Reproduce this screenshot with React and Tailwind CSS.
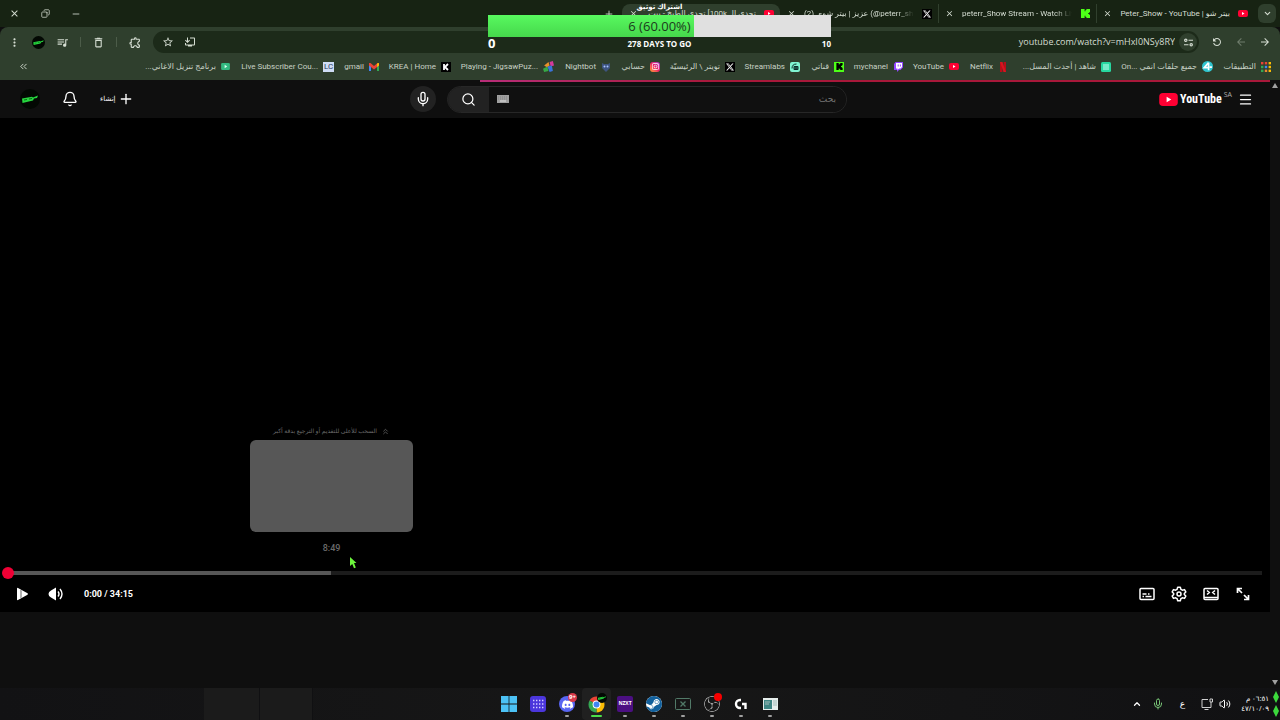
import {
    MdArrowBack,
    MdArrowForward,
    MdClose,
    MdDeleteOutline,
    MdInstallDesktop,
    MdMoreVert,
    MdOutlineExtension,
    MdOutlineQueueMusic,
    MdRefresh,
    MdStarBorder,
} from 'react-icons/md';
import { SiDiscord, SiInstagram, SiKick, SiObsstudio, SiSteam, SiX } from 'react-icons/si';
import { Bell, ChevronDown, ChevronUp, ChevronsLeft, ChevronsUp, Copy, Menu, Mic, Minus, Plus, Search, Volume2 } from 'lucide-react';

function YouTubeMark({ className }) {
    return (
        <svg viewBox="0 0 20 14" className={className} aria-hidden="true">
            <rect width="20" height="14" rx="4" fill="#ff0033" />
            <path d="M8 4v6l5-3z" fill="#fff" />
        </svg>
    );
}

function Avatar({ className }) {
    return (
        <svg viewBox="0 0 20 20" className={className} aria-hidden="true">
            <circle cx="10" cy="10" r="10" fill="#030803" />
            <path d="M2 9.500l10-1.800 1 .800 5-2-1 2.500-3 .500-1 2-10.500 2.500z" fill="#27d63f" />
            <path d="M4 11l3-.500M9 10l3-.500" stroke="#0a6a18" />
        </svg>
    );
}

function KickIcon() {
    return (
        <svg viewBox="0 0 10 10" className="size-[9px]" aria-hidden="true">
            <path d="M0 0h4v2.500h1V1h1V0h4v3.500H9v1H8v1h1v1h1V10H6V9H5V7.500H4V10H0z" fill="#4dff17" />
        </svg>
    );
}

function XIcon() {
    return (
        <span className="flex size-[10px] items-center justify-center bg-black text-white">
            <SiX size={8} />
        </span>
    );
}

function KickBadge() {
    return (
        <span className="flex size-[10px] items-center justify-center bg-[#4dff17] text-black">
            <SiKick size={7} />
        </span>
    );
}

function AppsIcon() {
    const colors = ['#ea4335', '#ea4335', '#fbbc04', '#34a853', '#4285f4', '#fbbc04', '#34a853', '#ea8635', '#fbbc04'];
    return (
        <svg viewBox="0 0 10 10" className="size-[10px]" aria-hidden="true">
            {colors.map((color, index) => (
                <rect key={index} x={(index % 3) * 3.8} y={Math.floor(index / 3) * 3.8} width="2.400" height="2.400" fill={color} />
            ))}
        </svg>
    );
}

function AnimeIcon() {
    return (
        <svg viewBox="0 0 10 10" className="size-[11px]" aria-hidden="true">
            <circle cx="5" cy="5" r="5" fill="#2fc5cf" />
            <path d="M6 1.500L2 6h3.500M6 1.500v7M7 5.500h2" stroke="#fff" strokeWidth="1.500" fill="none" />
        </svg>
    );
}

function ShahidIcon() {
    return (
        <svg viewBox="0 0 10 10" className="size-[10px]" aria-hidden="true">
            <rect width="10" height="10" rx="1.500" fill="#27d8a0" />
            <path d="M2 3h6M2 5h6M2 7h6" stroke="#c9fff0" />
        </svg>
    );
}

function NetflixIcon() {
    return (
        <svg viewBox="0 0 10 10" className="size-[10px]" aria-hidden="true">
            <path d="M2 0h2.400v10H2zM5.600 0H8v10H5.600z" fill="#b80d18" />
            <path d="M2 0h2.400L8 10H5.600z" fill="#d81420" />
        </svg>
    );
}

function StreamlabsIcon() {
    return (
        <svg viewBox="0 0 10 10" className="size-[10px]" aria-hidden="true">
            <rect width="10" height="10" rx="2" fill="#80f5d2" />
            <path d="M2 6.500C2 3.500 3.500 2 6.500 2" stroke="#0b2d2a" fill="none" />
            <rect x="3.500" y="4" width="5" height="4" rx="1" fill="#0b2d2a" />
            <path d="M5 5.500v1M7 5.500v1" stroke="#80f5d2" strokeWidth=".700" />
        </svg>
    );
}

function InstagramIcon() {
    return (
        <span className="flex size-[10px] items-center justify-center rounded-[3px] bg-linear-to-tr from-[#ff9a1f] via-[#ee1d62] to-[#a51fd1] text-white">
            <SiInstagram size={7} />
        </span>
    );
}

function TwitchIcon() {
    return (
        <svg viewBox="0 0 10 10" className="size-[10px]" aria-hidden="true">
            <path d="M2.500 0H10v5.500L7.500 8H6l-2 2V8H1V2z" fill="#9146ff" />
            <path d="M3 1h6v4L7.500 6.500H6L4.500 8V6.500H3z" fill="#fff" />
            <path d="M5.200 2.500v2M7.400 2.500v2" stroke="#9146ff" />
        </svg>
    );
}

function NightbotIcon() {
    return (
        <svg viewBox="0 0 10 10" className="size-[10px]" aria-hidden="true">
            <path d="M1 1l2 1h4l2-1v5L5 10 1 6z" fill="#3e5480" />
            <circle cx="3.500" cy="4.500" r="1" fill="#a9c4ff" />
            <circle cx="6.500" cy="4.500" r="1" fill="#a9c4ff" />
        </svg>
    );
}

function JigsawIcon() {
    return (
        <svg viewBox="0 0 10 10" className="size-[11px]" aria-hidden="true">
            <path d="M1 4l4-3 1 3-2 2z" fill="#e8902a" />
            <path d="M6 1l3-1 1 4-3 1z" fill="#d43a9a" />
            <path d="M4 5l4-1 1 5-3 1z" fill="#3a73dc" />
            <path d="M0 7l4-2 1 4-4 1z" fill="#36a946" />
        </svg>
    );
}

function KreaIcon() {
    return (
        <svg viewBox="0 0 10 10" className="size-[10px]" aria-hidden="true">
            <rect width="10" height="10" fill="#000" />
            <path d="M3 2v6M7 2L4 5l3 3" stroke="#fff" strokeWidth="1.800" fill="none" />
        </svg>
    );
}

function GmailIcon() {
    return (
        <svg viewBox="0 0 10 8" className="h-2 w-[10px]" aria-hidden="true">
            <path d="M0 1h2v7H0z" fill="#4285f4" />
            <path d="M8 1h2v7H8z" fill="#34a853" />
            <path d="M0 0h1.500L5 3 8.500 0H10v2.500L5 6.500 0 2.500z" fill="#ea4335" />
            <path d="M8 .500L10 0v2.500L8 4z" fill="#fbbc04" />
        </svg>
    );
}

function SongsIcon() {
    return (
        <svg viewBox="0 0 10 8" className="h-[7px] w-[9px]" aria-hidden="true">
            <rect width="10" height="8" rx="1.500" fill="#33b981" />
            <path d="M4 2v4l3-2z" fill="#d8fff0" />
        </svg>
    );
}

const tabs = [
    { title: 'بيتر شو | Peter_Show - YouTube', dir: 'rtl', icon: <YouTubeMark className="h-[7px] w-[10px]" /> },
    { title: 'peterr_Show Stream - Watch Live', dir: 'ltr', icon: <KickIcon /> },
    { title: '(2) عزيز | بيتر شوى (@peterr_show)', dir: 'ltr', icon: <XIcon /> },
    { title: 'تحدي الـ 100k] تحدي الطبخ - بيت', dir: 'rtl', icon: <YouTubeMark className="h-[7px] w-[10px]" />, active: true },
];

const bookmarks = [
    { title: 'التطبيقات', icon: <AppsIcon /> },
    { title: 'جميع حلقات انمي On...\u200e', icon: <AnimeIcon /> },
    { title: 'شاهد | أحدث المسل...', icon: <ShahidIcon /> },
    { title: 'Netflix', icon: <NetflixIcon /> },
    { title: 'YouTube', icon: <YouTubeMark className="h-[7px] w-[10px]" /> },
    { title: 'mychanel', icon: <TwitchIcon /> },
    { title: 'قناتي', icon: <KickBadge /> },
    { title: 'Streamlabs', icon: <StreamlabsIcon /> },
    { title: 'تويتر \\ الرئيسيّة', icon: <XIcon /> },
    { title: 'حسابي', icon: <InstagramIcon /> },
    { title: 'Nightbot', icon: <NightbotIcon /> },
    { title: 'Playing - JigsawPuz...', icon: <JigsawIcon /> },
    { title: 'KREA | Home', icon: <KreaIcon /> },
    { title: 'gmail', icon: <GmailIcon /> },
    { title: 'Live Subscriber Cou...', icon: <span className="flex h-[10px] w-[11px] items-center justify-center bg-[#cfdcf5] text-[8px] text-[#24385e]">LC</span> },
    { title: 'برنامج تنزيل الاغاني...', icon: <SongsIcon /> },
];

function TabStrip() {
    return (
        <div className="flex h-[27px] items-center bg-[#172313] pr-1">
            <button aria-label="البحث في علامات التبويب" className="flex h-[19px] w-[18px] items-center justify-center rounded-md bg-[#2f3f2d]">
                <ChevronDown size={9} strokeWidth={3} />
            </button>
            <div className="mr-1 flex font-['Roboto','DejaVu_Sans',sans-serif]">
                {tabs.map((tab, index) => (
                    <div
                        key={index}
                        className={`flex h-[19px] w-[158px] items-center gap-2 px-[6px] ${tab.active ? 'rounded-lg bg-[#2f3f2d]' : ''} ${index < 2 ? 'border-l border-[#31402e]' : ''}`}
                    >
                        <span className="flex w-[10px] shrink-0 justify-center">{tab.icon}</span>
                        <span
                            dir={tab.dir}
                            className={`w-[110px] overflow-hidden text-[8px] leading-4 whitespace-nowrap ${tab.dir === 'ltr' ? 'mask-r-from-85%' : ''}`}
                        >
                            {tab.title}
                        </span>
                        <button aria-label="إغلاق" className="shrink-0">
                            <MdClose size={9} />
                        </button>
                    </div>
                ))}
            </div>
            <button aria-label="علامة تبويب جديدة" className="mr-2">
                <Plus size={10} />
            </button>
            <div className="mr-auto flex items-center gap-[21px] pl-[9px]">
                <button aria-label="تصغير"><Minus size={10} /></button>
                <button aria-label="استعادة"><Copy size={9} className="rotate-90" /></button>
                <button aria-label="إغلاق النافذة"><MdClose size={11} /></button>
            </div>
        </div>
    );
}

function Toolbar() {
    return (
        <div className="flex h-[30px] items-center rounded-t-lg bg-[#2f3f2d] pr-[9px] pl-2">
            <div className="flex items-center gap-3">
                <button aria-label="رجوع"><MdArrowForward size={12} /></button>
                <button aria-label="تقدّم" className="text-[#6f7c6c]"><MdArrowBack size={12} /></button>
                <button aria-label="إعادة تحميل"><MdRefresh size={12} className="-scale-x-100" /></button>
            </div>
            <div className="mx-3 flex h-[22px] flex-1 items-center rounded-full bg-[#1c2a19] pr-[2px] pl-[9px]">
                <button aria-label="معلومات الموقع" className="flex size-[18px] items-center justify-center rounded-full bg-[#2f3f2d]">
                    <svg viewBox="0 0 10 10" className="size-[9px]" fill="none" stroke="currentColor" strokeWidth="1.300">
                        <circle cx="2" cy="2.500" r="1.300" />
                        <path d="M5 2.500h5M0 7.500h5" />
                        <circle cx="8" cy="7.500" r="1.300" />
                    </svg>
                </button>
                <input
                    aria-label="شريط العناوين"
                    dir="ltr"
                    defaultValue="youtube.com/watch?v=mHxI0NSy8RY"
                    className="mr-1 min-w-0 flex-1 bg-transparent text-right text-[9px] text-[#d5ddd2] outline-none"
                />
                <div className="flex items-center gap-[10px]">
                    <button aria-label="تثبيت"><MdInstallDesktop size={12} className="-scale-x-100" /></button>
                    <button aria-label="إضافة إشارة"><MdStarBorder size={12} /></button>
                </div>
            </div>
            <div className="flex items-center gap-[11px]">
                <button aria-label="الإضافات"><MdOutlineExtension size={13} className="-scale-x-100" /></button>
                <span className="h-[10px] w-px bg-[#4c5c49]" />
                <button aria-label="حذف"><MdDeleteOutline size={13} /></button>
                <span className="h-[10px] w-px bg-[#4c5c49]" />
                <button aria-label="الوسائط"><MdOutlineQueueMusic size={13} /></button>
                <button aria-label="الملف الشخصي"><Avatar className="size-[13px]" /></button>
                <button aria-label="المزيد"><MdMoreVert size={13} /></button>
            </div>
        </div>
    );
}

function Bookmarks() {
    return (
        <nav className="flex h-[23px] items-center bg-[#2f3f2d] pr-[9px] pb-1 pl-[18px]">
            <div className="grid flex-1 grid-cols-[58fr_102fr_103fr_49fr_56fr_59fr_44fr_65fr_75fr_49fr_57fr_103fr_72fr_45fr_104fr_201fr]">
                {bookmarks.map((item, index) => (
                    <a key={index} href="#" className="flex min-w-0 items-center gap-[5px] font-['Roboto','DejaVu_Sans',sans-serif] text-[8px] leading-4 whitespace-nowrap text-[#c8d1c5]">
                        <span className="flex shrink-0 justify-center">{item.icon}</span>
                        <span dir="auto">{item.title}</span>
                    </a>
                ))}
            </div>
            <button aria-label="المزيد من الإشارات"><ChevronsLeft size={11} /></button>
        </nav>
    );
}

function GoalOverlay() {
    return (
        <div dir="ltr" className="absolute top-0 left-[calc(50%-152px)] w-[343px] font-['Open_Sans','Noto_Sans','DejaVu_Sans',sans-serif] text-white">
            <p className="h-[15px] text-center text-[7px] leading-[14px] font-bold">اشتراك توثيق</p>
            <div className="relative h-[22px] bg-[#e0e0e0]">
                <div className="h-full w-3/5 bg-linear-to-b from-[#58f95f] to-[#46d84c]" />
                <p className="absolute inset-0 text-center text-[13px] leading-[22px] text-[#1c3a1c]">6 (60.00%)</p>
            </div>
            <div className="flex h-[14px] items-center justify-between font-bold">
                <span className="w-5 text-[13px]">0</span>
                <span className="text-[8px]">278 DAYS TO GO</span>
                <span className="w-5 text-right text-[8px]">10</span>
            </div>
        </div>
    );
}

function Header() {
    return (
        <header className="flex h-9 items-center bg-[#0f0f0f] pr-[17px] pb-[2px] pl-1 text-white">
            <div className="flex flex-1 items-center">
                <button aria-label="القائمة"><Menu size={15} /></button>
                <span className="mr-[6px] self-start text-[7px] leading-[8px] text-[#aaaaaa]">SA</span>
                <a href="#" dir="ltr" className="mr-[2px] flex items-center gap-[2px]">
                    <YouTubeMark className="h-[13px] w-[19px]" />
                    <span className="font-['Liberation_Sans_Narrow','Roboto_Condensed','Liberation_Sans',sans-serif] text-[12px] leading-4 font-bold">YouTube</span>
                </a>
            </div>
            <div className="flex items-center gap-[11px]">
                <form className="flex h-[27px] w-[400px] overflow-hidden rounded-full border border-[#272727]">
                    <input
                        type="text"
                        aria-label="بحث"
                        placeholder="بحث"
                        className="min-w-0 flex-1 bg-[#101010] pr-[10px] text-[9px] outline-none placeholder:text-[#747474]"
                    />
                    <span className="flex w-7 items-center justify-center bg-[#101010]">
                        <svg viewBox="0 0 12 8" className="h-2 w-3" aria-hidden="true">
                            <rect width="12" height="8" fill="#a0a0a0" />
                            <path d="M1 2h10M1 4h10" stroke="#858585" strokeDasharray="1 1" />
                            <path d="M3 6h6" stroke="#e0e0e0" />
                        </svg>
                    </span>
                    <button type="button" aria-label="ابحث" className="flex w-[41px] items-center justify-center bg-[#222222]">
                        <Search size={15} />
                    </button>
                </form>
                <button aria-label="البحث الصوتي" className="flex size-[26px] items-center justify-center rounded-full bg-[#222222]">
                    <Mic size={16} />
                </button>
            </div>
            <div className="flex flex-1 items-center justify-end gap-[22px]">
                <button className="flex items-center gap-[2px] text-[7px]">
                    <Plus size={16} />
                    إنشاء
                </button>
                <button aria-label="الإشعارات"><Bell size={16} /></button>
                <button aria-label="الحساب" className="ml-4"><Avatar className="size-5" /></button>
            </div>
        </header>
    );
}

function SeekPreview() {
    return (
        <div className="absolute bottom-[56px] left-[250px] flex w-[163px] flex-col items-center text-[#6b6b6b]">
            <p dir="rtl" className="flex items-center gap-1 pb-px text-[6px] leading-4 whitespace-nowrap">
                <ChevronsUp size={9} />
                السحب للأعلى للتقديم أو الترجيع بدقة أكبر
            </p>
            <div className="h-[92px] w-full rounded-md bg-[#575757]" />
            <span className="mt-2 font-['Roboto',sans-serif] text-[9px] leading-4 font-medium">8:49</span>
        </div>
    );
}

function Player() {
    return (
        <section dir="ltr" className="relative flex h-[calc(100vh-226px)] flex-col justify-end bg-black text-white">
            <SeekPreview />
            <div className="relative mx-2 h-1 bg-[#1c1c1c]">
                <div className="h-full w-[323px] bg-[#575757]" />
                <input
                    type="range"
                    aria-label="شريط التقدّم"
                    min="0"
                    max="2055"
                    defaultValue="0"
                    className="absolute inset-x-[-6px] top-[-4px] h-3 appearance-none bg-transparent [&::-webkit-slider-thumb]:size-3 [&::-webkit-slider-thumb]:appearance-none [&::-webkit-slider-thumb]:rounded-full [&::-webkit-slider-thumb]:bg-[#f00035]"
                />
            </div>
            <div className="flex h-[37px] items-center justify-between pr-[19px] pl-4">
                <div className="flex items-center gap-5">
                    <button aria-label="تشغيل">
                        <svg viewBox="0 0 12 14" className="h-[14px] w-3">
                            <path d="M1 1.500Q1 .500 2 1l9.500 5.300q.800.700 0 1.400L2 13q-1 .500-1-.500z" fill="#fff" />
                            <path d="M4 2.500v9l2-1v-7z" fill="#b0b0b0" />
                        </svg>
                    </button>
                    <button aria-label="كتم الصوت">
                        <svg viewBox="0 0 16 14" className="h-[14px] w-4" fill="none" stroke="#fff" strokeWidth="1.400">
                            <path d="M8 .500v13L3 10.500Q.500 9.500.500 7T3 3.500z" fill="#fff" stroke="none" />
                            <path d="M10 4.500q2 2.500 0 5M12 2q4 5 0 10" />
                        </svg>
                    </button>
                    <span className="font-['Roboto',sans-serif] text-[9px] leading-4 font-bold">0:00 / 34:15</span>
                </div>
                <div className="flex items-center gap-4">
                    <button aria-label="الترجمة">
                        <svg viewBox="0 0 16 16" className="size-4" fill="none" stroke="currentColor" strokeWidth="1.500">
                            <rect x="1" y="2.500" width="14" height="11" rx="1" />
                            <path d="M3.500 8h4M9 8h1.500M3.500 10.500h1.500M6.500 10.500h6" />
                        </svg>
                    </button>
                    <button aria-label="الإعدادات">
                        <svg viewBox="0 0 16 16" className="size-4" fill="none" stroke="currentColor" strokeWidth="1.500" strokeLinejoin="round">
                            <path d="M6.700 1.200h2.600l.600 2.100 1.500.900 2.100-.600 1.300 2.300L13.300 7.500v1l1.500 1.600-1.300 2.300-2.100-.600-1.500.900-.600 2.100H6.700l-.600-2.100-1.500-.900-2.100.600-1.300-2.300 1.500-1.600v-1L1.200 5.900l1.300-2.300 2.100.600 1.500-.900z" />
                            <circle cx="8" cy="8" r="2" />
                        </svg>
                    </button>
                    <button aria-label="وضع المسرح">
                        <svg viewBox="0 0 16 16" className="size-4" fill="none" stroke="currentColor" strokeWidth="1.500">
                            <rect x="1" y="2.500" width="14" height="11" rx="1" />
                            <path d="M1 11.500h14M4 4.500l2.300 2L4 8.500M12 4.500l-2.300 2 2.300 2" />
                        </svg>
                    </button>
                    <button aria-label="ملء الشاشة">
                        <svg viewBox="0 0 16 16" className="size-4" fill="none" stroke="currentColor" strokeWidth="1.700">
                            <path d="M2.500 7V2.500H7M2.500 2.500L7 7M9 13.500h4.500V9M13.500 13.500L9 9" />
                        </svg>
                    </button>
                </div>
            </div>
            <svg viewBox="0 0 8 12" className="absolute bottom-[43px] left-[350px] h-3 w-2" aria-hidden="true">
                <path d="M0 0l6.500 6H4l1.800 4.500-1.800.800L2.300 7 0 9z" fill="#6cf53c" />
            </svg>
        </section>
    );
}

function ChromeIcon() {
    return (
        <svg viewBox="0 0 20 20" className="size-[17px]" aria-hidden="true">
            <path d="M10 10L1.800 5.300A9.500 9.500 0 0118.200 5.300z" fill="#ea4335" />
            <path d="M10 10l8.200-4.700A9.500 9.500 0 0110 19.500z" fill="#fbbc04" />
            <path d="M10 10v9.500A9.500 9.500 0 011.800 5.300z" fill="#34a853" />
            <circle cx="10" cy="10" r="4.600" fill="#fff" />
            <circle cx="10" cy="10" r="3.500" fill="#4285f4" />
        </svg>
    );
}

const apps = [
    {
        name: 'ابدأ',
        icon: (
            <svg viewBox="0 0 16 16" className="size-4">
                <path d="M0 0h7.600v7.600H0zM8.400 0H16v7.600H8.400zM0 8.400h7.600V16H0zM8.400 8.400H16V16H8.400z" fill="#4cc2f5" />
            </svg>
        ),
    },
    {
        name: 'التطبيقات',
        icon: (
            <svg viewBox="0 0 16 16" className="size-4">
                <rect width="16" height="16" rx="3" fill="#4b36dc" />
                <path d="M3 4.500h11M3 8h11M3 11.500h11" stroke="#d5ceff" strokeWidth="1.400" strokeDasharray="1.400 1.600" />
            </svg>
        ),
    },
    {
        name: 'Discord',
        open: true,
        badge: <span className="absolute -top-[2px] -right-[2px] flex size-[9px] items-center justify-center rounded-full bg-[#d83a4a] text-[6px] font-bold text-white">9+</span>,
        icon: <span className="flex size-4 items-center justify-center rounded-full bg-[#5865f2] text-white"><SiDiscord size={11} /></span>,
    },
    {
        name: 'Chrome',
        open: true,
        active: true,
        badge: <Avatar className="absolute -top-[2px] -right-[2px] size-[10px]" />,
        icon: <ChromeIcon />,
    },
    { name: 'NZXT', open: true, icon: <span className="flex size-4 items-center justify-center rounded-xs bg-[#4b0f82] text-[5px] font-bold text-white">NZXT</span> },
    {
        name: 'Steam',
        open: true,
        icon: <span className="flex size-4 items-center justify-center rounded-full bg-white text-[#12609c]"><SiSteam size={16} /></span>,
    },
    {
        name: 'Xbox',
        open: true,
        icon: (
            <svg viewBox="0 0 16 16" className="size-4" fill="none" stroke="#527a68">
                <rect x=".500" y="2.500" width="15" height="11" rx="1" />
                <path d="M5.500 5.500l5 5M10.500 5.500l-5 5" strokeWidth="1.300" />
            </svg>
        ),
    },
    {
        name: 'OBS',
        open: true,
        badge: <span className="absolute -top-[2px] -right-[2px] size-2 rounded-full bg-[#f80000]" />,
        icon: <SiObsstudio size={16} className="rounded-full bg-[#171717] text-[#c8c8c8]" />,
    },
    {
        name: 'Logitech G HUB',
        open: true,
        icon: (
            <svg viewBox="0 0 16 16" className="size-4" fill="none" stroke="#fff" strokeWidth="2.400">
                <path d="M8 4H7a4 4 0 000 8h1M9 8h3.500v5" />
            </svg>
        ),
    },
    {
        name: 'المحرر',
        open: true,
        icon: (
            <svg viewBox="0 0 16 16" className="size-4">
                <rect x="1" y="2" width="15" height="12" fill="#e6eeec" />
                <rect x="2" y="4" width="8" height="9" fill="#3f8583" />
                <path d="M3 6h5M3 8h4M11 5h4M11 7h4M11 9h4" stroke="#a3bcb9" />
            </svg>
        ),
    },
];

function Taskbar() {
    return (
        <footer dir="ltr" className="flex h-8 items-center bg-linear-to-r from-[#121214] via-[#171717] to-[#111113] text-white">
            <div className="flex flex-1 self-stretch" aria-hidden="true">
                <span className="flex-[205]" />
                <span className="flex-[55] border-r border-[#101012] bg-[#1b1b1b]" />
                <span className="flex-[53] border-r border-[#101012] bg-[#1b1b1b]" />
                <span className="flex-[182]" />
            </div>
            <div className="flex">
                {apps.map((app) => (
                    <button
                        key={app.name}
                        aria-label={app.name}
                        className={`flex h-8 w-[29px] flex-col items-center justify-end gap-[2px] pb-[3px] ${app.active ? 'rounded bg-[#202020]' : ''}`}
                    >
                        <span className="relative flex h-[18px] items-center">
                            {app.icon}
                            {app.badge}
                        </span>
                        <span className={`h-[2px] rounded-full ${app.active ? 'w-[11px] bg-[#4be04b]' : app.open ? 'w-1 bg-[#a0a0a0]' : 'w-1'}`} />
                    </button>
                ))}
            </div>
            <div className="flex flex-1 items-center justify-end pr-px">
                <button aria-label="الرموز المخفية"><ChevronUp size={10} strokeWidth={3} /></button>
                <Mic size={12} className="ml-[10px] text-[#78c476]" />
                <span className="mr-3 ml-4 text-[9px]">ع</span>
                <svg viewBox="0 0 12 12" className="mx-1 size-3" fill="none" stroke="#d0d0d0" aria-hidden="true">
                    <path d="M7 1.500H1v8h9V6M3.500 11.500h4M9 1h2.500v3H9zM10 4v2" />
                </svg>
                <Volume2 size={12} className="ml-[2px]" />
                <div dir="rtl" className="mr-1 w-[38px] text-[7px] leading-[10px]">
                    <p>٠٦:٥١ م</p>
                    <p>٤٧/١٠/٠٩</p>
                </div>
                <svg viewBox="0 0 6 28" className="h-7 w-[6px]" aria-hidden="true">
                    <path d="M3 1l3 6-3 6-3-6zM3 15l3 6-3 6-3-6z" fill="#3cd83c" />
                </svg>
            </div>
        </footer>
    );
}

export default function App() {
    return (
        <div dir="rtl" className="relative flex min-h-screen flex-col bg-[#0f0f0f] font-['Open_Sans','Noto_Sans','DejaVu_Sans',sans-serif] text-[#d5ddd2]">
            <TabStrip />
            <Toolbar />
            <Bookmarks />
            <div dir="ltr" className="flex flex-1">
                <div dir="rtl" className="min-w-0 flex-1">
                    <div className="ml-[480px] h-[2px] bg-linear-to-r from-[#b82d78] to-[#a8183a] to-30%" />
                    <Header />
                    <Player />
                </div>
                <div className="flex w-[10px] flex-col items-center justify-between py-[3px]" aria-hidden="true">
                    <svg viewBox="0 0 6 5" className="h-[5px] w-[6px]"><path d="M3 0l3 5H0z" fill="#a0a0a0" /></svg>
                    <svg viewBox="0 0 6 5" className="h-[5px] w-[6px]"><path d="M3 5L0 0h6z" fill="#a0a0a0" /></svg>
                </div>
            </div>
            <Taskbar />
            <GoalOverlay />
        </div>
    );
}
